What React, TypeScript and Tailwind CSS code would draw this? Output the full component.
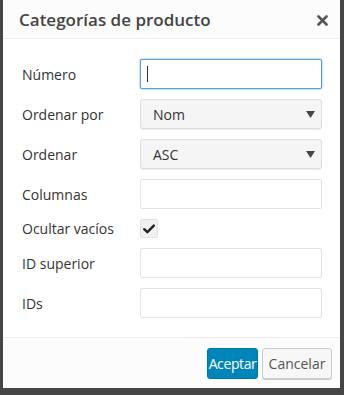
import React from "react";

const font = { fontFamily: '"Open Sans", "Liberation Sans", sans-serif' };

function Row({ label, children, h = "h-[30px]" }: { label: string; children: React.ReactNode; h?: string }) {
  return (
    <div className={`flex items-center ${h}`}>
      <div className="w-[118px] shrink-0 pl-[19px] text-[14px] text-[#333]">{label}</div>
      <div className="w-[182px] ml-[19px] h-full flex items-center">{children}</div>
    </div>
  );
}

function TextBox({ focus = false }: { focus?: boolean }) {
  return (
    <div
      className={`h-[30px] w-full rounded-[2px] bg-white flex items-center pl-[6px] ${
        focus ? "border border-[#5b9dd9] shadow-[0_0_2px_rgba(30,140,190,0.8)]" : "border border-[#e2e2e2]"
      }`}
    >
      {focus && <div className="w-px h-[16px] bg-[#333]" />}
    </div>
  );
}

function Select({ value }: { value: string }) {
  return (
    <div className="h-[30px] w-full rounded-[3px] border border-[#dcdcdc] bg-[#f5f5f5] shadow-[0_1px_0_rgba(0,0,0,0.08)] flex items-center pl-[12px] pr-[6px] justify-between">
      <span className="text-[14px] text-[#333]">{value}</span>
      <svg width="9" height="7" viewBox="0 0 9 7">
        <path d="M0 0 L9 0 L4.5 7 Z" fill="#444" />
      </svg>
    </div>
  );
}

export default function App() {
  return (
    <div className="w-[344px] h-[395px] bg-[#464646] pl-[3px] pr-[4px] pb-[7px]" style={font}>
      <div className="h-full bg-white flex flex-col">
        <div className="h-[39px] shrink-0 flex items-center justify-between border-b border-[#eaeaea] bg-[#fcfcfc] pl-[16px] pr-[12px]">
          <span className="text-[17px] font-semibold text-[#444] leading-none">Categorías de producto</span>
          <svg width="11" height="11" viewBox="0 0 11 11" className="mt-[2px]">
            <path d="M1.5 1.5 L9.5 9.5 M9.5 1.5 L1.5 9.5" stroke="#555" strokeWidth="2.6" strokeLinecap="round" />
          </svg>
        </div>
        <div className="flex-1 flex flex-col gap-[10px] pt-[20px]">
          <Row label="Número">
            <TextBox focus />
          </Row>
          <Row label="Ordenar por">
            <Select value="Nom" />
          </Row>
          <Row label="Ordenar">
            <Select value="ASC" />
          </Row>
          <Row label="Columnas">
            <TextBox />
          </Row>
          <Row label="Ocultar vacíos" h="h-[19px]">
            <div className="w-[18px] h-[19px] rounded-[2px] border border-[#e0e0e0] bg-[#f1f1f1] flex items-center justify-center">
              <svg width="12" height="10" viewBox="0 0 12 10">
                <path d="M1.2 5.2 L4.4 8.2 L10.8 1.6" stroke="#222" strokeWidth="2.4" fill="none" strokeLinecap="round" strokeLinejoin="round" />
              </svg>
            </div>
          </Row>
          <Row label="ID superior">
            <TextBox />
          </Row>
          <Row label="IDs">
            <TextBox />
          </Row>
        </div>
        <div className="h-[51px] shrink-0 border-t border-[#eaeaea] bg-[#fcfcfc] flex items-start justify-end gap-[4px] pt-[10px] pr-[8px]">
          <button className="h-[31px] w-[51px] rounded-[3px] bg-[#0085ba] border border-[#0073aa] text-white text-[14px] tracking-[-0.4px]">
            Aceptar
          </button>
          <button className="h-[31px] w-[70px] rounded-[3px] bg-[#f7f7f7] border border-[#cccccc] shadow-[0_1px_0_#ccc] text-[#555] text-[14px]">
            Cancelar
          </button>
        </div>
      </div>
    </div>
  );
}
